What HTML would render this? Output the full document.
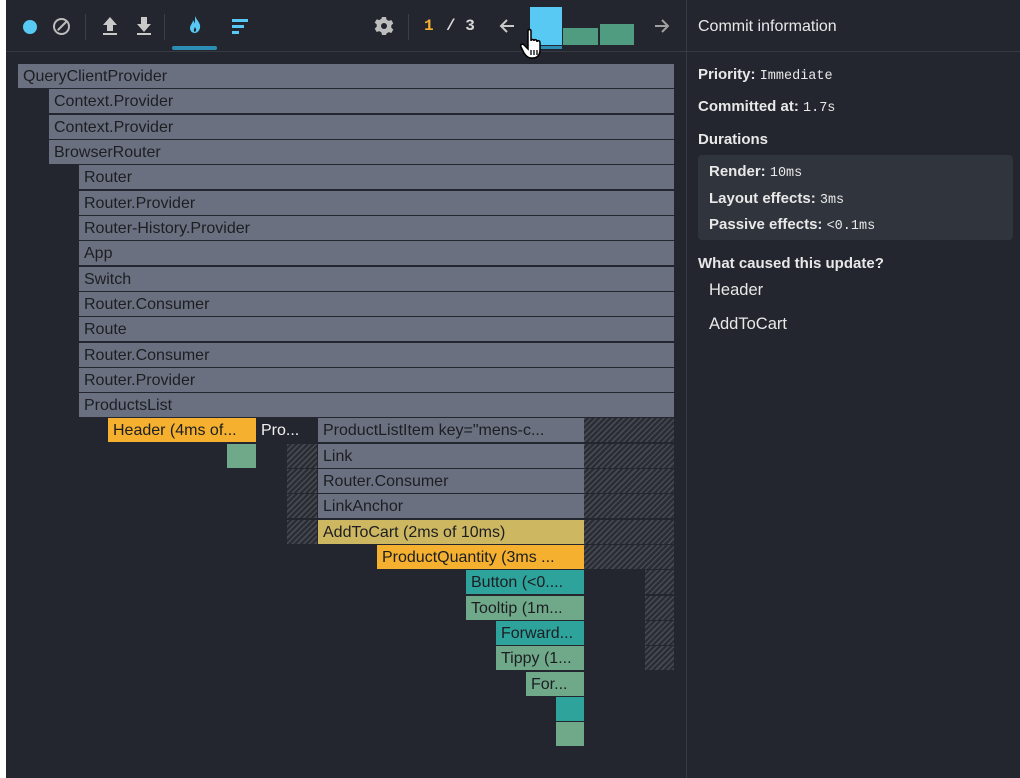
<!DOCTYPE html>
<html><head><style>
*{margin:0;padding:0;box-sizing:border-box}
body{width:1020px;height:778px;background:#fff;font-family:"Liberation Sans",sans-serif;overflow:hidden;position:relative}
#app{position:absolute;left:6px;top:0;width:1014px;height:778px;background:#23262e}
.b{position:absolute;height:24px;font-size:16px;line-height:26px;padding-left:5px;color:#1c1e22;white-space:nowrap;overflow:hidden}
.g{background:#6b7080}
.o{background:#f4b02e}
.y{background:#cdb761}
.t{background:#2ea39b}
.gr{background:#70a98a}
.h{position:absolute;height:24px;background:repeating-linear-gradient(135deg,#474a52 0 1.5px,#2a2d33 1.5px 4px)}
.mono{font-family:"Liberation Mono",monospace;font-weight:normal;font-size:13.5px}
.rp{position:absolute;color:#e8e8e8;font-size:15px;font-weight:bold}
</style></head><body>
<div id="app">
<div style="position:absolute;left:0;top:51px;width:680px;height:1px;background:#363a42"></div>
<div style="position:absolute;left:680px;top:0;width:1px;height:778px;background:#363a42"></div>
<div style="position:absolute;left:680px;top:51px;width:334px;height:1px;background:#363a42"></div>
<!-- toolbar -->
<div style="position:absolute;left:17px;top:20px;width:14px;height:14px;border-radius:50%;background:#57c9f2"></div>
<div style="position:absolute;left:47px;top:18px;width:17px;height:17px;border-radius:50%;border:2px solid #bcbcbc"></div>
<div style="position:absolute;left:50px;top:25px;width:12px;height:2px;background:#bcbcbc;transform:rotate(-45deg)"></div>
<div style="position:absolute;left:79px;top:14px;width:1px;height:26px;background:#3a3e46"></div>
<svg style="position:absolute;left:94px;top:15px" width="20" height="22"><path d="M10 2 L17 10 H13 V16 H7 V10 H3 Z" fill="#c9c9c9"/><rect x="3" y="18" width="14" height="2" fill="#c9c9c9"/></svg>
<svg style="position:absolute;left:128px;top:15px" width="20" height="22"><path d="M10 17 L17 9 H13 V2 H7 V9 H3 Z" fill="#c9c9c9"/><rect x="3" y="18" width="14" height="2" fill="#c9c9c9"/></svg>
<div style="position:absolute;left:158px;top:14px;width:1px;height:26px;background:#3a3e46"></div>
<svg style="position:absolute;left:181px;top:14px" width="16" height="22"><path d="M8 2 C10 7 14 9 13 14 C12 18 9 19 8 19 C5 19 3 17 3 14 C3 11 6 9 6 6 C7 8 8 9 8 10 Z" fill="#57c9f2"/><path d="M8 13 C9 15 10 16 8 18 C6 17 7 15 8 13Z" fill="#23262e"/></svg>
<div style="position:absolute;left:166px;top:46px;width:45px;height:4px;background:#2d8eb5;border-radius:2px"></div>
<div style="position:absolute;left:226px;top:19px;width:16px;height:3px;background:#57c9f2"></div>
<div style="position:absolute;left:226px;top:25px;width:12px;height:3px;background:#57c9f2"></div>
<div style="position:absolute;left:226px;top:31px;width:7px;height:3px;background:#57c9f2"></div>
<svg style="position:absolute;left:368px;top:16px" width="20" height="20" viewBox="0 0 20 20"><path d="M8 1h4l.6 2.6 2.2 1.3 2.5-.9 2 3.4-2 1.8v2.6l2 1.8-2 3.4-2.5-.9-2.2 1.3L12 19H8l-.6-2.6-2.2-1.3-2.5.9-2-3.4 2-1.8V8.4l-2-1.8 2-3.4 2.5.9 2.2-1.3z" fill="#bdbdbd"/><circle cx="10" cy="10" r="3" fill="#23262e"/></svg>
<div style="position:absolute;left:402px;top:14px;width:1px;height:26px;background:#3a3e46"></div>
<div style="position:absolute;left:418px;top:17px;font-size:16px;font-family:'Liberation Mono',monospace;font-weight:bold;color:#f4b02e">1</div>
<div style="position:absolute;left:440px;top:17px;font-size:16px;font-family:'Liberation Mono',monospace;font-weight:bold;color:#d8d8d8">/ 3</div>
<svg style="position:absolute;left:492px;top:17px" width="18" height="18"><path d="M16 9H3M9 3L3 9l6 6" stroke="#c9c9c9" stroke-width="2" fill="none"/></svg>
<div style="position:absolute;left:524px;top:7px;width:32px;height:38px;background:#57c9f2"></div>
<div style="position:absolute;left:524px;top:46px;width:32px;height:3px;background:#2d8eb5"></div>
<div style="position:absolute;left:557px;top:28px;width:35px;height:17px;background:#4f9c80"></div>
<div style="position:absolute;left:594px;top:24px;width:34px;height:21px;background:#4f9c80"></div>
<svg style="position:absolute;left:647px;top:17px" width="18" height="18"><path d="M2 9h13M9 3l6 6-6 6" stroke="#a0a0a0" stroke-width="2" fill="none"/></svg>
<svg style="position:absolute;left:514px;top:28px" width="30" height="34"><path d="M8 3 C8 1 11 1 11 3 V13 C11 11 14 11 14 13 C14 11 17 11 17 14 C17 12 20 12 20 15 V22 C20 27 17 30 13 30 H11 C8 30 6 28 4 25 L1 19 C0 17 2 15 4 17 L8 21 Z" fill="#fff" stroke="#000" stroke-width="1.5"/><path d="M11 22v5M14 22v5M17 22v5" stroke="#000" stroke-width="1.3"/></svg>
<!-- flame graph -->
<div class="b g" style="left:12px;top:64px;width:656px">QueryClientProvider</div>
<div class="b g" style="left:43px;top:89px;width:625px">Context.Provider</div>
<div class="b g" style="left:43px;top:115px;width:625px">Context.Provider</div>
<div class="b g" style="left:43px;top:140px;width:625px">BrowserRouter</div>
<div class="b g" style="left:73px;top:165px;width:595px">Router</div>
<div class="b g" style="left:73px;top:191px;width:595px">Router.Provider</div>
<div class="b g" style="left:73px;top:216px;width:595px">Router-History.Provider</div>
<div class="b g" style="left:73px;top:241px;width:595px">App</div>
<div class="b g" style="left:73px;top:267px;width:595px">Switch</div>
<div class="b g" style="left:73px;top:292px;width:595px">Router.Consumer</div>
<div class="b g" style="left:73px;top:317px;width:595px">Route</div>
<div class="b g" style="left:73px;top:343px;width:595px">Router.Consumer</div>
<div class="b g" style="left:73px;top:368px;width:595px">Router.Provider</div>
<div class="b g" style="left:73px;top:393px;width:595px">ProductsList</div>

<div class="b o" style="left:102px;top:418px;width:148px">Header (4ms of...</div>
<div class="b" style="left:250px;top:418px;width:60px;color:#f0f0f0">Pro...</div>
<div class="b g" style="left:312px;top:418px;width:266px">ProductListItem key="mens-c...</div>
<div class="h" style="left:578px;top:418px;width:90px"></div>
<div class="b gr" style="left:221px;top:444px;width:29px"></div>
<div class="h" style="left:281px;top:444px;width:30px"></div>
<div class="b g" style="left:312px;top:444px;width:266px">Link</div>
<div class="h" style="left:578px;top:444px;width:90px"></div>
<div class="h" style="left:281px;top:469px;width:30px"></div>
<div class="b g" style="left:312px;top:469px;width:266px">Router.Consumer</div>
<div class="h" style="left:578px;top:469px;width:90px"></div>
<div class="h" style="left:281px;top:494px;width:30px"></div>
<div class="b g" style="left:312px;top:494px;width:266px">LinkAnchor</div>
<div class="h" style="left:578px;top:494px;width:90px"></div>
<div class="h" style="left:281px;top:520px;width:30px"></div>
<div class="b y" style="left:312px;top:520px;width:266px">AddToCart (2ms of 10ms)</div>
<div class="h" style="left:578px;top:520px;width:90px"></div>
<div class="b o" style="left:371px;top:545px;width:207px">ProductQuantity (3ms ...</div>
<div class="h" style="left:578px;top:545px;width:90px"></div>
<div class="b t" style="left:460px;top:570px;width:118px">Button (&lt;0....</div>
<div class="h" style="left:639px;top:570px;width:29px"></div>
<div class="b gr" style="left:460px;top:596px;width:118px">Tooltip (1m...</div>
<div class="h" style="left:639px;top:596px;width:29px"></div>
<div class="b t" style="left:490px;top:621px;width:88px">Forward...</div>
<div class="h" style="left:639px;top:621px;width:29px"></div>
<div class="b gr" style="left:490px;top:646px;width:88px">Tippy (1...</div>
<div class="h" style="left:639px;top:646px;width:29px"></div>
<div class="b gr" style="left:520px;top:672px;width:58px">For...</div>
<div class="b t" style="left:550px;top:697px;width:28px"></div>
<div class="b gr" style="left:550px;top:722px;width:28px"></div>
<!-- right panel -->
<div class="rp" style="left:692px;top:18px;font-weight:normal;font-size:16px">Commit information</div>
<div class="rp" style="left:692px;top:66px">Priority: <span class="mono">Immediate</span></div>
<div class="rp" style="left:692px;top:98px">Committed at: <span class="mono">1.7s</span></div>
<div class="rp" style="left:692px;top:131px">Durations</div>
<div style="position:absolute;left:692px;top:155px;width:315px;height:85px;background:#30343c;border-radius:4px"></div>
<div class="rp" style="left:703px;top:163px">Render: <span class="mono">10ms</span></div>
<div class="rp" style="left:703px;top:190px">Layout effects: <span class="mono">3ms</span></div>
<div class="rp" style="left:703px;top:216px">Passive effects: <span class="mono">&lt;0.1ms</span></div>
<div class="rp" style="left:692px;top:255px">What caused this update?</div>
<div class="rp" style="left:703px;top:281px;font-weight:normal;font-size:16.5px">Header</div>
<div class="rp" style="left:703px;top:315px;font-weight:normal;font-size:16.5px">AddToCart</div>
</div>
</body></html>
